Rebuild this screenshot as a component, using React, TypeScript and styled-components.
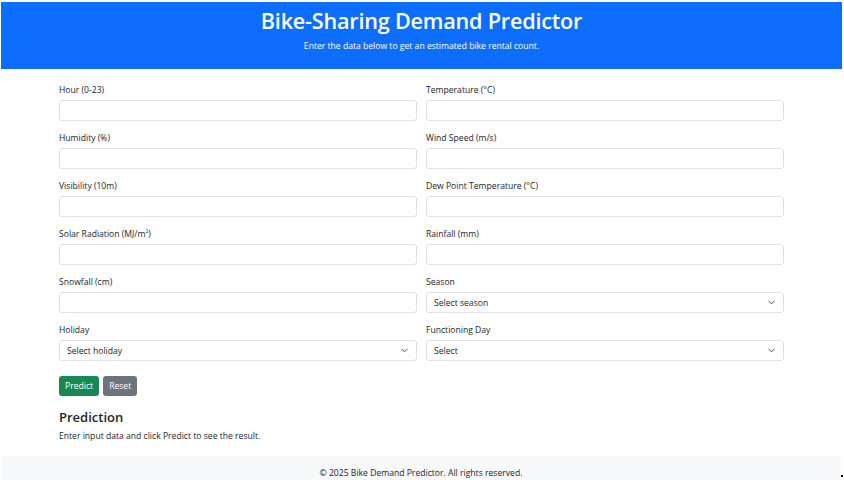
import React from "react";
import styled, { createGlobalStyle } from "styled-components";

const Global = createGlobalStyle`
  html, body { margin: 0; padding: 0; background: #ffffff; }
  body { font-family: "Open Sans", "Noto Sans", sans-serif; color: #212529; }
  * { box-sizing: border-box; }
`;

const Page = styled.div`
  width: 844px;
  height: 480px;
  padding: 2px 2px 0 1px;
  display: flex;
  flex-direction: column;
  position: relative;
  overflow: hidden;
`;

const Header = styled.header`
  background: #0d6efd;
  color: #ffffff;
  height: 67px;
  display: flex;
  flex-direction: column;
  align-items: center;
  padding-top: 4px;
`;

const Title = styled.h1`
  margin: 0;
  font-size: 21.6px;
  font-weight: 600;
  line-height: 30px;
  letter-spacing: -0.2px;
`;

const Subtitle = styled.p`
  margin: 4px 0 0;
  font-size: 8.6px;
  line-height: 12px;
`;

const Main = styled.main`
  width: 725px;
  margin: 0 auto;
  padding-top: 15px;
  flex: 1;
`;

const Grid = styled.div`
  display: grid;
  grid-template-columns: 1fr 1fr;
  column-gap: 9px;
  row-gap: 11px;
`;

const Field = styled.div`
  display: flex;
  flex-direction: column;
`;

const Label = styled.label`
  font-size: 8.6px;
  line-height: 12px;
  margin-bottom: 4px;
  sup { font-size: 5px; line-height: 0; }
`;

const Input = styled.div`
  height: 21px;
  border: 1px solid #dee2e6;
  border-radius: 3px;
  background: #fff;
`;

const Select = styled.div`
  height: 21px;
  border: 1px solid #dee2e6;
  border-radius: 3px;
  background: #fff;
  display: flex;
  align-items: center;
  justify-content: space-between;
  padding: 0 8px 0 7px;
  font-size: 8.6px;
  svg { display: block; }
`;

const Buttons = styled.div`
  display: flex;
  gap: 4px;
  margin-top: 15px;
`;

const Button = styled.button<{ $variant: "success" | "secondary" }>`
  height: 20px;
  border: none;
  border-radius: 3px;
  padding: 0 6px;
  font-family: inherit;
  font-size: 8.6px;
  color: #fff;
  background: ${(p) => (p.$variant === "success" ? "#198754" : "#6c757d")};
`;

const ResultTitle = styled.h2`
  margin: 12px 0 0;
  font-size: 13px;
  font-weight: 600;
  line-height: 18px;
`;

const ResultText = styled.p`
  margin: 4px 0 0;
  font-size: 8.6px;
  line-height: 12px;
`;

const Footer = styled.footer`
  height: 24px;
  margin-right: 1px;
  background: #f8f9fa;
  display: flex;
  align-items: flex-end;
  justify-content: center;
  padding-bottom: 1px;
  font-size: 8.6px;
  line-height: 12px;
`;

const Dot = styled.span`
  position: absolute;
  right: 1px;
  bottom: 3px;
  width: 2px;
  height: 2px;
  background: #000;
`;

const Chevron = () => (
  <svg width="7" height="5" viewBox="0 0 16 10">
    <path d="M2 2l6 6 6-6" fill="none" stroke="#343a40" strokeWidth="2" strokeLinecap="round" strokeLinejoin="round" />
  </svg>
);

const fields: { label: React.ReactNode; select?: string }[] = [
  { label: "Hour (0-23)" },
  { label: "Temperature (°C)" },
  { label: "Humidity (%)" },
  { label: "Wind Speed (m/s)" },
  { label: "Visibility (10m)" },
  { label: "Dew Point Temperature (°C)" },
  { label: <>Solar Radiation (MJ/m<sup>2</sup>)</> },
  { label: "Rainfall (mm)" },
  { label: "Snowfall (cm)" },
  { label: "Season", select: "Select season" },
  { label: "Holiday", select: "Select holiday" },
  { label: "Functioning Day", select: "Select" },
];

export default function App() {
  return (
    <>
      <Global />
      <Page>
        <Header>
          <Title>Bike-Sharing Demand Predictor</Title>
          <Subtitle>Enter the data below to get an estimated bike rental count.</Subtitle>
        </Header>
        <Main>
          <Grid>
            {fields.map((f, i) => (
              <Field key={i}>
                <Label>{f.label}</Label>
                {f.select ? (
                  <Select>
                    <span>{f.select}</span>
                    <Chevron />
                  </Select>
                ) : (
                  <Input />
                )}
              </Field>
            ))}
          </Grid>
          <Buttons>
            <Button $variant="success">Predict</Button>
            <Button $variant="secondary">Reset</Button>
          </Buttons>
          <ResultTitle>Prediction</ResultTitle>
          <ResultText>Enter input data and click Predict to see the result.</ResultText>
        </Main>
        <Footer>© 2025 Bike Demand Predictor. All rights reserved.</Footer>
        <Dot />
      </Page>
    </>
  );
}
